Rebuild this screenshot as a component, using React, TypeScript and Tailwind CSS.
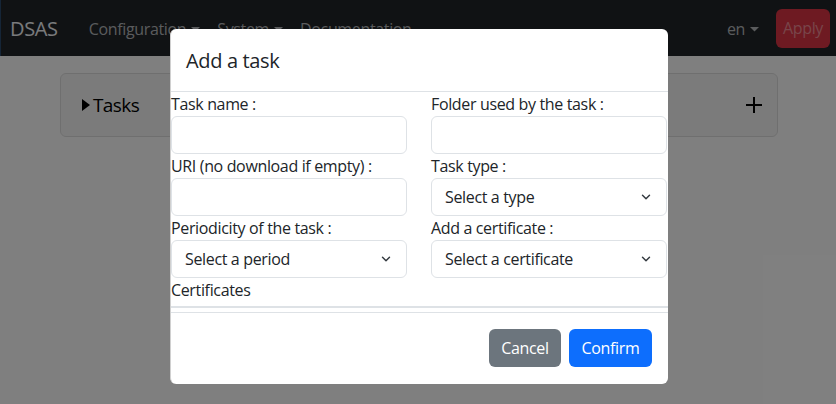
import { ChevronDown } from "lucide-react";

const font = { fontFamily: '"Open Sans", "Noto Sans", sans-serif' };

function Caret() {
  return (
    <svg width="9" height="5" viewBox="0 0 9 5" className="ml-[5px] inline-block">
      <path d="M0 0h9L4.5 4.5z" fill="currentColor" />
    </svg>
  );
}

function Field({ label, select }: { label: string; select?: string }) {
  return (
    <div className="flex flex-col">
      <label className="text-base leading-6 text-[#212529]">{label}</label>
      {select ? (
        <div className="flex h-[38px] items-center justify-between rounded-[6px] border border-[#dee2e6] pl-[13px] pr-[13px] text-base text-[#212529]">
          <span>{select}</span>
          <ChevronDown size={14} strokeWidth={2.5} className="text-[#343a40]" />
        </div>
      ) : (
        <div className="h-[38px] rounded-[6px] border border-[#dee2e6] bg-white" />
      )}
    </div>
  );
}

export default function App() {
  return (
    <div
      className="relative h-[404px] w-[836px] overflow-hidden bg-white tracking-[-0.35px]"
      style={font}
    >
      <nav className="flex h-14 items-center border-l border-[#2b4a6e] bg-[#212529] pl-[9px] pr-[6px] pt-[2px]">
        <span className="text-xl text-[#f2f4f8]">DSAS</span>
        <div className="ml-[31px] flex items-center gap-[17px] text-base text-[#b5b7ba]">
          <span className="flex items-center">
            Configuration
            <Caret />
          </span>
          <span className="flex items-center">
            System
            <Caret />
          </span>
          <span>Documentation</span>
        </div>
        <div className="ml-auto flex items-center gap-[17px]">
          <span className="flex items-center text-base text-[#b5b7ba]">
            en
            <Caret />
          </span>
          <span className="-mt-[2px] flex h-[39px] w-[54px] items-center justify-center rounded-[6px] bg-[#dc3545] text-base text-[#f08a94]">
            Apply
          </span>
        </div>
      </nav>

      <div className="pl-[60px] pt-[17px]">
        <div className="flex h-[64px] w-[718px] items-center justify-between rounded-[6px] border border-[#dfdfdf] bg-[#f7f7f7] pl-[21px] pr-[15px]">
          <div className="flex items-center gap-[3px] text-[19px] tracking-[-0.6px] text-black">
            <svg width="8" height="12" viewBox="0 0 8 12">
              <path d="M0 0l8 6-8 6z" fill="black" />
            </svg>
            <span>Tasks</span>
          </div>
          <svg width="16" height="16" viewBox="0 0 16 16">
            <path d="M8 0v16M0 8h16" stroke="black" strokeWidth="2" />
          </svg>
        </div>
      </div>

      <div className="absolute inset-0 flex justify-center bg-black/50 pl-[2px] pt-[29px]">
        <div className="flex h-[355px] w-[498px] flex-col rounded-[6px] border-l border-[#d0d0d0] bg-white">
          <div className="border-b border-[#dee2e6] px-[15px] pb-[15px] pt-[17px]">
            <h5 className="text-xl leading-[30px] text-[#212529]">Add a task</h5>
          </div>
          <div className="flex flex-col">
            <div className="grid grid-cols-2 gap-x-6 pr-[1px]">
              <Field label="Task name :" />
              <Field label="Folder used by the task :" />
              <Field label="URI (no download if empty) :" />
              <Field label="Task type :" select="Select a type" />
              <Field label="Periodicity of the task :" select="Select a period" />
              <Field label="Add a certificate :" select="Select a certificate" />
            </div>
            <span className="text-base leading-6 text-[#212529]">Certificates</span>
            <div className="mt-[4px] h-[2px] bg-[#dee2e6]" />
            <div className="h-[4px]" />
          </div>
          <div className="flex justify-end gap-2 border-t border-[#dee2e6] p-4">
            <button className="flex h-[38px] w-[72px] items-center justify-center rounded-[6px] bg-[#6c757d] text-base text-white">
              Cancel
            </button>
            <button className="flex h-[38px] w-[83px] items-center justify-center rounded-[6px] bg-[#0d6efd] text-base text-white">
              Confirm
            </button>
          </div>
        </div>
      </div>
    </div>
  );
}
